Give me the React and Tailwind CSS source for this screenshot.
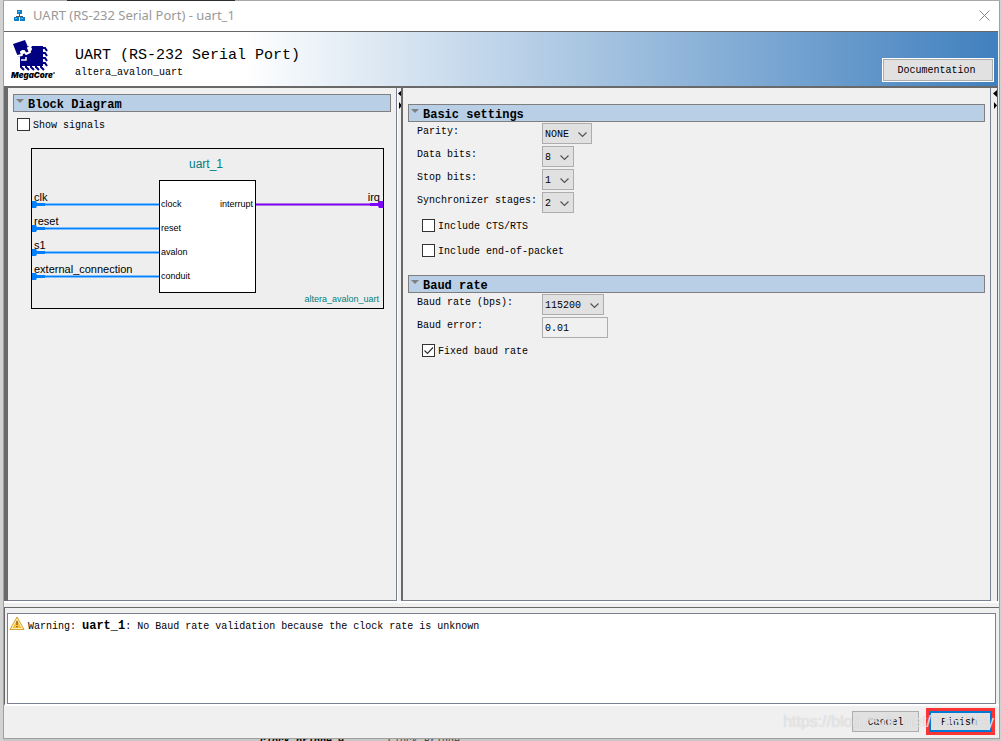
import React from "react";

const inputs = [
  { name: "clk", role: "clock", y: 56 },
  { name: "reset", role: "reset", y: 80 },
  { name: "s1", role: "avalon", y: 104 },
  { name: "external_connection", role: "conduit", y: 128 },
];

function TreeIcon() {
  return (
    <svg width="11" height="11" viewBox="0 0 11 11" aria-hidden="true">
      <path d="M5 4h1v2h3v2H8V7H3v1H2V6h3z" fill="#555" />
      <path d="M3 0h5v4H3zM0 7h5v4H0zM6 7h5v4H6z" fill="#0f7fc8" />
      <path d="M4 1h2v1H4zM1 8h2v1H1zM7 8h2v1H7z" fill="#4fc0f5" />
    </svg>
  );
}

function MegaCoreLogo() {
  return (
    <svg width="46" height="42" viewBox="0 0 46 42" role="img" aria-label="MegaCore">
      <path d="M9 14l3-6 6-2h14v20H9z" fill="#000080" />
      <path d="M2 4L14 0l5 12L7 17z" fill="#000080" />
      <path d="M6 16l5-1-1-3 3-1 2 3 4-2-2-4 3-2-3-6" fill="none" stroke="#fff" strokeWidth="2" strokeLinejoin="round" />
      <circle cx="19" cy="9" r="2" fill="#fff" />
      <circle cx="12" cy="12" r="2" fill="#fff" />
      <path d="M10 20l5 0 0-3" fill="none" stroke="#fff" strokeWidth="1.500" />
      <path d="M31 8h3l2 3M31 13h3l2 3M31 18h3l2 3M31 23h3l2 3" fill="none" stroke="#000080" strokeWidth="2" />
      <path d="M10 25v2l3 3M15 25v2l3 3M20 25v2l3 3M25 25v2l3 3M30 25v2l3 3" fill="none" stroke="#000080" strokeWidth="2" />
      <text x="0" y="38" fontFamily="Inter, sans-serif" fontSize="8" fontWeight="900" fontStyle="italic" fill="#000">MegaCore</text>
      <circle cx="43" cy="33" r="1" fill="#555" />
    </svg>
  );
}

function WarningIcon() {
  return (
    <svg width="16" height="15" viewBox="0 0 16 15" aria-hidden="true">
      <path d="M8 1L15 13.500H1z" fill="#f6c445" stroke="#d9a23a" strokeLinejoin="round" />
      <path d="M8 3L13.400 12.500H2.600z" fill="none" stroke="#fff0b8" />
      <path d="M7 5h2v4H7zM7 10h2v1.500H7z" fill="#b57a1c" />
    </svg>
  );
}

function Section({ title, children }) {
  return (
    <section>
      <h2 className="flex h-[18px] items-start overflow-hidden border border-[#7f7f7f] bg-[#b8cfe5] text-[12px] font-bold leading-[20px]">
        <svg className="ml-0.5 mt-1 mr-1 shrink-0" width="8" height="5" viewBox="0 0 8 5" aria-hidden="true">
          <path d="M0 0h8L4 4z" fill="#7f7f7f" />
        </svg>
        {title}
      </h2>
      {children}
    </section>
  );
}

function Row({ id, label, children }) {
  return (
    <div className="flex h-[21px] items-start">
      <label htmlFor={id} className="w-[125px] shrink-0 whitespace-nowrap leading-[18px]">{label}</label>
      {children}
    </div>
  );
}

function Dropdown({ id, value, options, width }) {
  return (
    <div className={"grid h-[21px] " + width}>
      <select id={id} defaultValue={value} className="col-start-1 row-start-1 w-full appearance-none border border-[#adadad] bg-[#e1e1e1] pl-[2px] pt-[2px] text-[10px]">
        {options.map((o) => <option key={o}>{o}</option>)}
      </select>
      <svg className="pointer-events-none col-start-1 row-start-1 mr-[5px] mt-[2px] self-center justify-self-end" width="9" height="6" viewBox="0 0 9 6" aria-hidden="true">
        <path d="M.5.5l4 4 4-4" fill="none" stroke="#555" strokeWidth="1.200" />
      </svg>
    </div>
  );
}

function Check({ label, checked = false }) {
  return (
    <label className="flex h-[14px] items-start gap-[3px]">
      <span className="grid">
        <input type="checkbox" defaultChecked={checked} className="peer col-start-1 row-start-1 size-[13px] appearance-none border border-[#333] bg-white" />
        <svg className="pointer-events-none invisible col-start-1 row-start-1 peer-checked:visible" width="13" height="13" viewBox="0 0 13 13" aria-hidden="true">
          <path d="M2.500 6.500l3 3 5.500-6" fill="none" stroke="#333" strokeWidth="1.200" />
        </svg>
      </span>
      <span className="leading-[16px]">{label}</span>
    </label>
  );
}

function BlockDiagram() {
  return (
    <svg className="block" width="353" height="161" viewBox="0 0 353 161" role="img" aria-label="uart_1 block diagram" fontFamily="Liberation Sans, Arial, sans-serif">
      <rect x=".5" y=".5" width="352" height="160" fill="#eee" stroke="#000" />
      <rect x="128.500" y="32.500" width="96" height="112" fill="#fff" stroke="#000" />
      <text x="175" y="20" fontSize="12" textAnchor="middle" fill="#008080">uart_1</text>
      {inputs.map(({ name, role, y }) => (
        <g key={name}>
          <text x="3" y={y - 3} fontSize="11">{name}</text>
          <path d={`M1 ${y + 0.5}H128`} stroke="#80bfff" strokeWidth="3" />
          <path d={`M1 ${y + 0.5}H128`} stroke="#0080ff" />
          <path d={`M1 ${y - 3}h4l1 2h8v3H6l-1 2H1z`} fill="#0080ff" />
          <text x="130" y={y + 3} fontSize="9">{role}</text>
        </g>
      ))}
      <text x="222" y="59" fontSize="9" textAnchor="end">interrupt</text>
      <text x="349" y="53" fontSize="11" textAnchor="end">irq</text>
      <path d="M225 56.500H352" stroke="#b070e8" strokeWidth="3" />
      <path d="M225 56.500H352" stroke="#8000ff" />
      <path d="M352 53h-4l-1 2h-8v3h8l1 2h4z" fill="#8000ff" />
      <text x="348" y="154" fontSize="9" textAnchor="end" fill="#008080">altera_avalon_uart</text>
    </svg>
  );
}

function SplitArrows() {
  return (
    <svg className="mt-[2px]" width="4" height="20" viewBox="0 0 4 20" aria-hidden="true">
      <path d="M4 0v7L0 3.500zM1 12v7l3-3.500z" fill="#000" />
    </svg>
  );
}

export default function App() {
  return (
    <div className="flex h-screen flex-col overflow-hidden bg-[#d2d2d2] pl-[3px] pr-[2px] font-['Liberation_Mono',monospace] text-[10px] text-black">
      <div className="flex h-px shrink-0 bg-[#aaa]">
        <div className="ml-[64px] h-px w-[168px] bg-[#302c30]" />
      </div>
      <main className="flex min-h-0 flex-1 flex-col border-x border-b border-[#a0a0a0] bg-[#f0f0f0]">
        <div className="flex h-[30px] shrink-0 items-center bg-white pb-px pl-[10px] pr-[9px] font-['Noto_Sans',sans-serif] text-[13px] text-[#999]">
          <TreeIcon />
          <span className="ml-2 flex-1">UART (RS-232 Serial Port) - uart_1</span>
          <button aria-label="Close">
            <svg width="11" height="11" viewBox="0 0 11 11" aria-hidden="true">
              <path d="M.5.5l10 10M10.500.5l-10 10" stroke="#888" />
            </svg>
          </button>
        </div>

        <header className="mr-px flex h-[55px] shrink-0 items-start border-t border-[#666] bg-[linear-gradient(90deg,#fff_24%,#4080be)] pl-[7px] pr-[4px]">
          <div className="mt-[8px]"><MegaCoreLogo /></div>
          <div className="ml-[18px] flex-1">
            <h1 className="mt-[14px] text-[15px] leading-[20px]">UART (RS-232 Serial Port)</h1>
            <p className="leading-[14px]">altera_avalon_uart</p>
          </div>
          <button className="mt-[26px] h-[24px] w-[112px] border border-white bg-[#adadad] p-px">
            <span className="flex h-full items-center justify-center bg-[#e1e1e1] pt-px pr-[3px]">Documentation</span>
          </button>
        </header>

        <div className="mr-px flex min-h-0 flex-1 border-t-2 border-[#696969]">
          <div className="w-[4px] shrink-0 bg-[#696969]" />
          <div className="w-[389px] shrink-0 border-r border-b border-[#7a8090] pl-[5px] pr-[5px] pt-[6px]">
            <Section title="Block Diagram">
              <div className="px-1 pt-[6px]"><Check label="Show signals" /></div>
              <div className="pl-[18px] pt-[16px]"><BlockDiagram /></div>
            </Section>
          </div>
          <div className="w-[4px] shrink-0 border-l border-white"><SplitArrows /></div>
          <div className="flex flex-1 flex-col gap-[17px] border-b border-l-2 border-r border-[#7a8090] border-l-[#696969] pl-[5px] pr-[5px] pt-[16px]">
            <Section title="Basic settings">
              <div className="flex flex-col gap-[2px] pl-[9px] pt-px">
                <Row id="parity" label="Parity:"><Dropdown id="parity" value="NONE" options={["NONE", "EVEN", "ODD"]} width="w-[50px]" /></Row>
                <Row id="data" label="Data bits:"><Dropdown id="data" value="8" options={["7", "8", "9"]} width="w-[32px]" /></Row>
                <Row id="stop" label="Stop bits:"><Dropdown id="stop" value="1" options={["1", "2"]} width="w-[32px]" /></Row>
                <Row id="sync" label="Synchronizer stages:"><Dropdown id="sync" value="2" options={["2", "3", "4"]} width="w-[32px]" /></Row>
              </div>
              <div className="flex flex-col gap-[11px] pl-[14px] pt-[6px]">
                <Check label="Include CTS/RTS" />
                <Check label="Include end-of-packet" />
              </div>
            </Section>
            <Section title="Baud rate">
              <div className="flex flex-col gap-[2px] pl-[9px] pt-px">
                <Row id="baud" label="Baud rate (bps):"><Dropdown id="baud" value="115200" options={["9600", "57600", "115200"]} width="w-[62px]" /></Row>
                <Row id="error" label="Baud error:">
                  <input id="error" readOnly defaultValue="0.01" className="h-[21px] w-[66px] border border-[#adadad] bg-[#f0f0f0] px-[2px] pt-[2px]" />
                </Row>
              </div>
              <div className="pl-[14px] pt-[6px]"><Check label="Fixed baud rate" checked /></div>
            </Section>
          </div>
          <div className="w-[7px] shrink-0 border-r border-[#696969] pl-[2px]"><SplitArrows /></div>
        </div>

        <div className="h-[6px] shrink-0 border-t-2 border-white" />
        <div className="h-[99px] shrink-0 border-b-2 border-l border-t border-b-white border-l-[#696969] border-t-[#696969] pl-[2px] pr-[3px] pt-[5px]">
          <div className="flex h-full items-start gap-[3px] border border-[#7a8090] bg-white pl-px pt-[2px]">
            <WarningIcon />
            <p className="pt-[3px] leading-[14px]">Warning: <b className="text-[12px]">uart_1</b>: No Baud rate validation because the clock rate is unknown</p>
          </div>
        </div>

        <footer className="relative flex h-[32px] shrink-0 items-start justify-end gap-[7px] pr-[4px] pt-[2px]">
          <button className="mt-[3px] h-[21px] w-[67px] border border-[#adadad] bg-[#e1e1e1] pt-px">Cancel</button>
          <button className="h-[27px] w-[69px] border-[3px] border-[#fb3434] bg-[#0078d7] p-[2px]">
            <span className="flex h-full items-center justify-center bg-[#e1e1e1] pr-[3px] pt-px">Finish</span>
          </button>
          <span className="pointer-events-none absolute right-[5px] top-[7px] whitespace-nowrap font-['Liberation_Sans',sans-serif] text-[16px] leading-[18px] text-white/60 [text-shadow:0_0_1px_#bbb]">https://blog.csdn.net/RaSClay</span>
        </footer>
      </main>
      <div className="flex h-[2px] shrink-0 items-end overflow-hidden bg-[#c8c8c8] pl-[257px]">
        <b className="h-[2px] w-[128px] shrink-0 overflow-hidden leading-[6px]">clock_bridge_0</b>
        <span className="h-[2px] overflow-hidden leading-[6px] text-[#444]">Clock Bridge</span>
      </div>
    </div>
  );
}
